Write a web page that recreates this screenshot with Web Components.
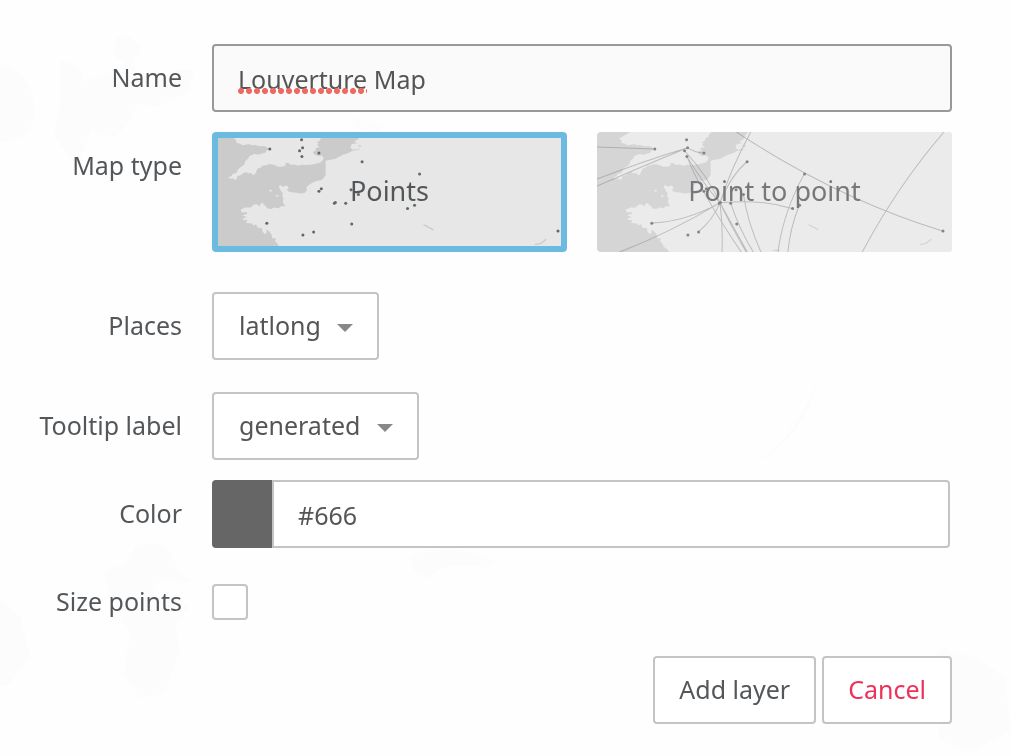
<!DOCTYPE html>
<html lang="en">
<head>
<meta charset="utf-8">
<meta name="viewport" content="width=device-width, initial-scale=1">
<title>Add layer</title>
<style>
    html {
        min-height: 100%;
        background: #fefefe;
    }
    body {
        margin: 0;
        color: #54575a;
        font-family: "Noto Sans", "Liberation Sans", sans-serif;
        font-size: 25px;
        line-height: 32px;
        --border: #c4c4c4;
        --accent: #6bbae0;
        --danger: #ee3158;
    }
</style>
</head>
<body>
<page-backdrop></page-backdrop>
<layer-form>
    <text-field label="Name" value="Louverture Map" misspelt="Louverture"></text-field>
    <map-type-field label="Map type"></map-type-field>
    <select-field class="places" label="Places" value="latlong"></select-field>
    <select-field label="Tooltip label" value="generated"></select-field>
    <color-field label="Color" value="#666"></color-field>
    <check-field label="Size points"></check-field>
    <form-button slot="actions">Add layer</form-button>
    <form-button slot="actions" kind="danger">Cancel</form-button>
</layer-form>

<script>
// Faint world map behind the form
class PageBackdrop extends HTMLElement {
    constructor() {
        super();
        this.attachShadow({ mode: "open" });
        this.shadowRoot.innerHTML = `
            <style>
                :host {
                    display: block;
                    position: fixed;
                    inset: 0;
                    z-index: -1;
                }
                svg { display: block; width: 100%; height: 100%; }
            </style>
            <svg viewBox="0 0 1012 756" preserveAspectRatio="xMidYMid slice" fill="#fcfcfc" aria-hidden="true">
                <path d="M60 60l18 6 6 16 22-8 14 4 4-16 10-4 2 18 18 6 22-12 20 0-10 24-28 12-20-2-10 20-14 14-22-8-12 30-10 0-16-26 6-30z"/>
                <path d="M116 38q14-6 22 6t-8 16q-12 2-16-6z"/>
                <path d="M0 64q30 6 34 38t-22 38l-12 2z"/>
                <path d="M104 572l24-10 8-16 18-4 16 8 8 20 12 10-8 4-18-6-12 10 6 14 20-8 10 14-12 18 4 24-16 44-24 4-16-24 6-40-20-36z"/>
                <path d="M0 600l20 16 10 40-22 30-8 0z"/>
                <path d="M816 380q-6 46-48 76l-12 6q46-32 60-82z"/>
                <path d="M930 664q12-24 22-12l24 6 30 20 4 54-40 20-30-12-6-40z"/>
                <path d="M410 556q30-14 66-2l20 8-12 6q-40-8-54 10l-16-6z"/>
                <path d="M355 118l30 8-6 6-28-4z"/>
            </svg>
        `;
    }
}

class LayerForm extends HTMLElement {
    constructor() {
        super();
        this.attachShadow({ mode: "open" });
        this.shadowRoot.innerHTML = `
            <style>
                :host {
                    display: block;
                    padding: 44px 60px 32px 30px;
                }
                form {
                    display: flex;
                    flex-direction: column;
                    gap: 20px;
                }
                .actions {
                    display: flex;
                    justify-content: flex-end;
                    gap: 6px;
                }
                ::slotted(.places) { margin-bottom: 12px; }
                ::slotted(map-type-field) { margin-bottom: 20px; }
            </style>
            <form>
                <slot></slot>
                <div class="actions"><slot name="actions"></slot></div>
            </form>
        `;
    }
}

// Shared row: right-aligned label and a control next to it
class FormField extends HTMLElement {
    connectedCallback() {
        this.attachShadow({ mode: "open" });
        this.shadowRoot.innerHTML = `
            <style>
                :host {
                    display: grid;
                    grid-template-columns: 152px minmax(0, 1fr);
                    column-gap: 30px;
                }
                * { box-sizing: border-box; }
                .label {
                    padding: 17px 0 19px;
                    text-align: right;
                    white-space: nowrap;
                }
                input, select {
                    font: inherit;
                    color: #555;
                    margin: 0;
                    border: 2px solid var(--border);
                    border-radius: 4px;
                    background: #fff;
                    appearance: none;
                    outline: none;
                }
                ${this.styles()}
            </style>
            ${this.labelMarkup()}
            ${this.control()}
        `;
    }
    get label() { return this.getAttribute("label"); }
    get value() { return this.getAttribute("value") || ""; }
    labelMarkup() { return `<label class="label" for="control">${this.label}</label>`; }
    styles() { return ""; }
    control() { return ""; }
}

class TextField extends FormField {
    styles() {
        return `
            .box { position: relative; }
            input {
                display: block;
                width: 100%;
                height: 68px;
                padding: 2px 24px 0;
                border-color: #999;
                background: #fafafa;
            }
            /* spelling mark: as wide as the word it sits under */
            .mark {
                position: absolute;
                left: 26px;
                bottom: 18px;
                height: 6px;
                overflow: hidden;
                color: transparent;
                background: radial-gradient(circle at 3px 3px, #ee6a5f 60%, transparent 75%) 0 0 / 8px 6px repeat-x;
                background-image: radial-gradient(circle 4px at 3px 3px, #ee6a5f 65%, transparent 85%);
                pointer-events: none;
            }
            .mark::before { content: attr(data-word); }
        `;
    }
    control() {
        const word = this.getAttribute("misspelt");
        return `
            <div class="box">
                <input id="control" type="text" spellcheck="false" value="${this.value}">
                ${word ? `<span class="mark" data-word="${word}" aria-hidden="true"></span>` : ""}
            </div>
        `;
    }
}

class SelectField extends FormField {
    styles() {
        return `
            .box {
                display: grid;
                justify-self: start;
                align-items: center;
            }
            select, svg { grid-area: 1 / 1; }
            select {
                height: 68px;
                padding: 0 56px 2px 25px;
            }
            svg {
                justify-self: end;
                width: 16px;
                height: 8px;
                margin: 4px 26px 0 0;
                fill: #888;
                pointer-events: none;
            }
        `;
    }
    control() {
        return `
            <div class="box">
                <select id="control"><option>${this.value}</option></select>
                <svg viewBox="0 0 16 8" aria-hidden="true"><path d="M0 0h16L8 8z"/></svg>
            </div>
        `;
    }
}

class ColorField extends FormField {
    styles() {
        return `
            .box { display: flex; padding-right: 2px; }
            .swatch {
                flex: none;
                width: 60px;
                border-radius: 4px 0 0 4px;
                background: ${this.value};
            }
            input {
                flex: 1;
                min-width: 0;
                height: 68px;
                padding: 2px 24px 0;
                border-radius: 0 4px 4px 0;
            }
        `;
    }
    control() {
        return `
            <div class="box">
                <span class="swatch"></span>
                <input id="control" type="text" value="${this.value}">
            </div>
        `;
    }
}

class CheckField extends FormField {
    styles() {
        return `
            :host { align-items: center; }
            input { width: 36px; height: 36px; }
            input:checked { background: var(--accent); }
        `;
    }
    control() { return `<input id="control" type="checkbox">`; }
}

class MapTypeField extends FormField {
    labelMarkup() { return `<span class="label" id="title">${this.label}</span>`; }
    styles() {
        return `
            .options { display: flex; gap: 30px; }
            .option {
                position: relative;
                flex: 1;
                display: grid;
                place-items: center;
                height: 120px;
                border-radius: 4px;
                overflow: hidden;
                font-size: 27px;
                cursor: pointer;
                opacity: .8;
            }
            .option > * { grid-area: 1 / 1; }
            map-preview { place-self: stretch; }
            .option span { z-index: 1; padding-bottom: 2px; }
            .option input {
                place-self: stretch;
                z-index: 1;
                border: 0;
                background: none;
            }
            .option:has(input:checked) { opacity: 1; }
            .option input:checked { border: 6px solid var(--accent); }
        `;
    }
    control() {
        return `
            <div class="options" role="radiogroup" aria-labelledby="title">
                <label class="option">
                    <map-preview></map-preview>
                    <input type="radio" name="type" value="points" checked>
                    <span>Points</span>
                </label>
                <label class="option">
                    <map-preview lines></map-preview>
                    <input type="radio" name="type" value="point-to-point">
                    <span>Point to point</span>
                </label>
            </div>
        `;
    }
}

const PLACES = [
    [268, 23], [173, 51], [271, 47], [262, 56], [269, 73], [320, 63], [449, 89],
    [621, 126], [320, 177], [327, 170], [416, 173], [438, 187], [366, 213],
    [369, 211], [400, 213], [164, 273], [272, 308], [304, 299], [418, 275],
    [585, 229], [606, 219], [1035, 296]
];
const ROUTES = `
    M0 45L173 51 M0 141Q130 90 271 47 M0 162Q130 105 271 47 M271 47Q292 62 320 63
    M262 56Q330 130 368 212 M269 73Q315 150 368 212L450 360 M269 73Q310 180 432 360
    M368 212Q400 130 449 89 M368 212Q400 110 460 0 M368 212Q260 270 164 272
    M368 212Q220 300 66 360 M368 212Q345 265 304 298 M368 212Q377 280 374 360
    M368 212Q400 280 447 360 M400 213Q425 290 468 360 M438 187Q450 270 491 360
    M368 212Q490 200 584 229 M620 126Q557 240 541 360 M605 219Q577 290 571 360
    M417 0Q720 200 1034 296 M1038 0Q900 160 793 360
`;

class MapPreview extends HTMLElement {
    connectedCallback() {
        const lines = this.hasAttribute("lines");
        const dots = PLACES.map(([x, y]) => `<circle cx="${x}" cy="${y}" r="4.5"/>`).join("");
        this.attachShadow({ mode: "open" });
        this.shadowRoot.innerHTML = `
            <style>
                :host { display: block; background: #cbcbcb; }
                svg { display: block; width: 100%; height: 100%; }
                .land { fill: #e7e7e7; }
                .lake { fill: none; stroke: #cbcbcb; stroke-width: 4; }
                .routes { fill: none; stroke: #555; stroke-opacity: .4; stroke-width: 3; }
                .dots { fill: #666; }
            </style>
            <svg viewBox="0 0 1062 360" preserveAspectRatio="xMinYMin slice" aria-hidden="true">
                <path class="land" d="M100 0L84 10 66 20 74 26 72 32 88 36 88 40 102 38 112 36 118 40 130 39 142 43 156 42
                    166 46 170 52 162 56 160 62 150 64 140 68 128 66 112 72 108 80 100 86 96 98 84 106 78 112 74 122
                    62 126 58 132 49 136 54 140 62 138 68 143 73 142 76 132 84 130 92 124 102 120 110 124 116 122 122 128
                    128 128 136 110 146 106 150 101 165 99 170 96 185 98 198 104 214 103 222 98 218 94 228 92 234 98 246 97
                    258 101 270 98 284 99 300 97 312 94 324 92 332 84 334 76 328 70 316 72 304 66 302 60 312 54 308 50
                    322 44 314 40 320 32 310 32 322 26 326 18 334 14 336 6 344 0z"/>
                <path class="land" d="M452 0L442 12 438 22 426 28 434 34 418 36 414 46 420 52 438 52 444 46 434 40 424 42
                    446 40 440 54 420 56 410 62 392 68 380 74 370 80 350 84 340 86 340 128 334 138 326 144 314 146
                    300 152 288 160 282 166 284 174 278 182 266 184 252 182 240 180 228 178 224 172 230 168 224 160
                    210 164 204 158 200 164 206 176 212 184 210 192 214 198 212 210 219 222 206 222 200 228 188 226
                    176 230 164 228 162 222 154 218 154 212 146 214 142 222 134 216 124 218 116 226 100 226 86 232
                    88 240 104 240 106 244 90 250 104 254 90 260 98 264 106 262 102 272 120 274 124 280 132 276 136 286
                    150 288 150 296 158 306 164 300 162 292 170 296 178 306 180 318 192 318 188 326 196 334 200 344
                    210 350 216 360H1062V0z"/>
                <path class="land" d="M170 174l8-1 1 5-7 0zM190 190l7-2 3 5-7 0z"/>
                <path class="lake" d="M633 278l12 4M642 283l10 4 10 6M966 337l18-4 16-12M526 354l20 0"/>
                ${lines ? `<path class="routes" d="${ROUTES}"/>` : ""}
                <g class="dots">${dots}</g>
            </svg>
        `;
    }
}

class FormButton extends HTMLElement {
    constructor() {
        super();
        this.attachShadow({ mode: "open" });
        this.shadowRoot.innerHTML = `
            <style>
                :host { display: block; }
                button {
                    height: 68px;
                    padding: 0 24px 2px;
                    border: 2px solid var(--border);
                    border-radius: 4px;
                    background: #fff;
                    color: inherit;
                    font: inherit;
                    cursor: pointer;
                }
                :host([kind="danger"]) button { color: var(--danger); }
            </style>
            <button type="button"><slot></slot></button>
        `;
    }
}

customElements.define("page-backdrop", PageBackdrop);
customElements.define("layer-form", LayerForm);
customElements.define("text-field", TextField);
customElements.define("select-field", SelectField);
customElements.define("color-field", ColorField);
customElements.define("check-field", CheckField);
customElements.define("map-preview", MapPreview);
customElements.define("map-type-field", MapTypeField);
customElements.define("form-button", FormButton);
</script>
</body>
</html>
